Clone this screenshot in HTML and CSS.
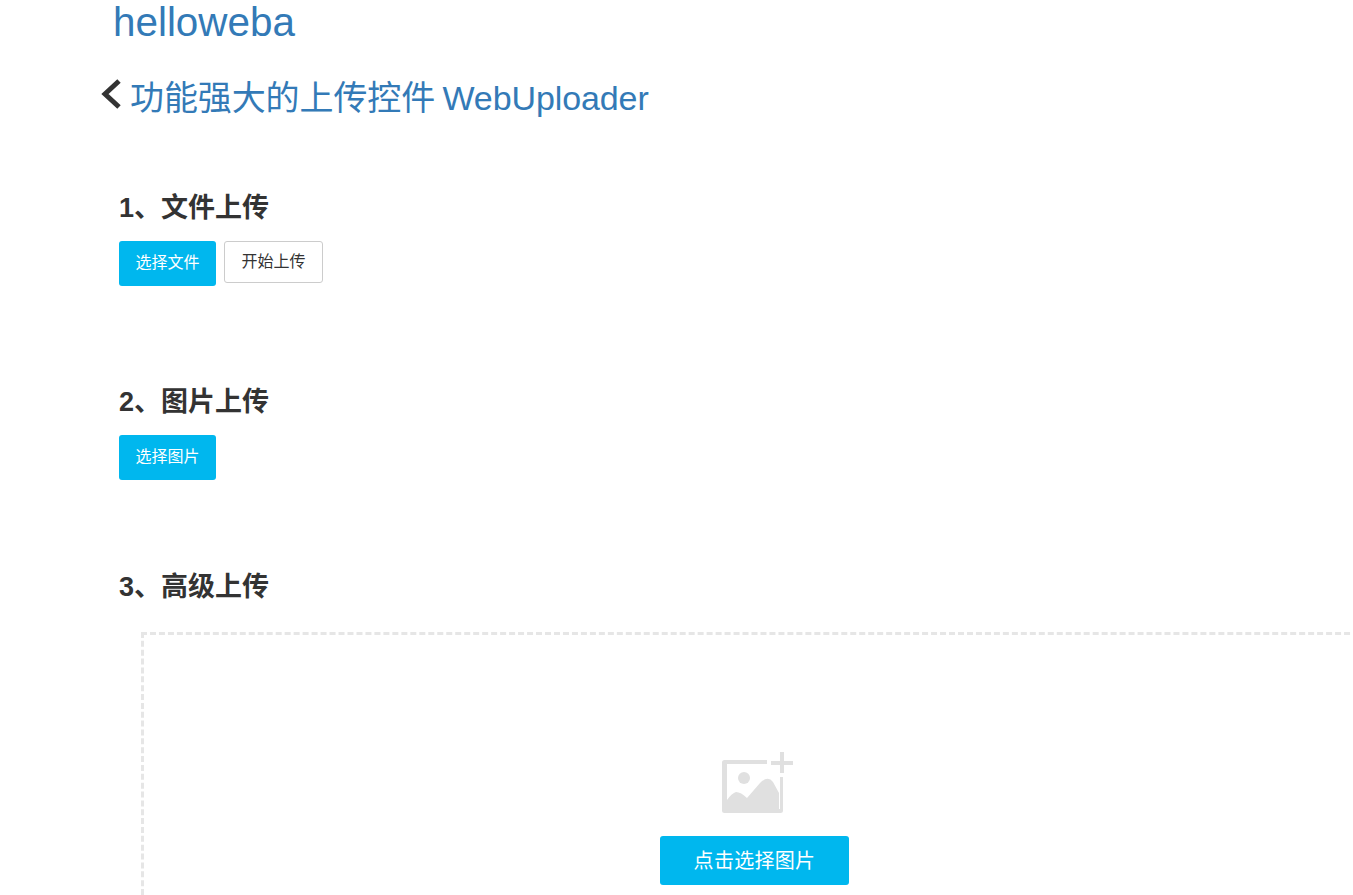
FILE: index.html
```html
<!DOCTYPE html>
<html lang="zh-CN">
<head>
<meta charset="utf-8">
<title>功能强大的上传控件 WebUploader</title>
<link rel="stylesheet" href="styles.css">
</head>
<body>
<div class="page">
  <h1 class="site-title"><a href="#">helloweba</a></h1>
  <h2 class="article-title">
    <svg class="back" viewBox="0 0 22 32" width="22" height="32" aria-hidden="true"><path d="M19 3 L5 16 L19 29" fill="none" stroke="#333" stroke-width="5"/></svg>
    <a href="#">功能强大的上传控件 WebUploader</a>
  </h2>
  <section class="demo first">
    <h3>1、文件上传</h3>
    <div class="actions">
      <button class="btn pick"><span>选择文件</span></button>
      <button class="btn plain"><span>开始上传</span></button>
    </div>
  </section>
  <section class="demo second">
    <h3>2、图片上传</h3>
    <div class="actions">
      <button class="btn pick"><span>选择图片</span></button>
    </div>
  </section>
  <section class="demo third">
    <h3>3、高级上传</h3>
    <div class="dropzone">
      <svg class="add-image" viewBox="0 0 72 62" width="72" height="62" aria-hidden="true">
        <path fill="#e0e0e0" d="M2.500 9 H45 V13 H5 V49 Q10 42 14 41 Q19 41 25 47 L38 32 Q46 24 51 31 L57 42 V62 H2.500 Q0 62 0 59.500 V11.500 Q0 9 2.500 9 Z"/>
        <path fill="#e0e0e0" d="M58 26 H61 V59.500 Q61 62 58.500 62 H57 V58 H58 Z"/>
        <circle cx="22" cy="27" r="6" fill="#e0e0e0"/>
        <path fill="#e0e0e0" d="M58 1 H62 V10 H71 V14 H62 V22 H58 V14 H49 V10 H58 Z"/>
      </svg>
      <button class="btn big"><span>点击选择图片</span></button>
    </div>
  </section>
</div>
</body>
</html>
```
FILE: styles.css
```css
* { box-sizing: border-box; }
html, body { margin: 0; height: 895px; overflow: hidden; background: #fff; }
body {
  font-family: "Liberation Sans", "Noto Sans CJK SC", sans-serif;
  color: #333;
}
.page { padding-left: 100px; height: 895px; overflow: hidden; }
a { color: #337ab7; text-decoration: none; }
.site-title {
  margin: 0 0 0 13px;
  height: 44px;
  font-size: 40.400px;
  font-weight: 400;
  line-height: 44px;
}
.article-title {
  margin: 30px 0 0;
  height: 48px;
  display: flex;
  align-items: center;
  font-size: 34px;
  font-weight: 400;
  line-height: 48px;
  word-spacing: -2px;
  letter-spacing: -0.1px;
}
.back { margin-right: 8px; margin-top: -8px; }
.demo { padding-left: 19px; }
.demo h3 {
  margin: 0;
  height: 38px;
  padding-top: 1px;
  font-size: 27px;
  font-weight: 700;
  line-height: 38px;
}
.first { margin-top: 66px; }
.second { margin-top: 96px; }
.third { margin-top: 87px; }
.actions { display: flex; align-items: flex-start; gap: 8px; margin-top: 15px; }
.btn {
  border: 0;
  padding: 0;
  border-radius: 3px;
  font-family: inherit;
  font-size: 16px;
  color: #fff;
}
.pick { width: 97px; height: 45px; background: #00b7ee; padding-bottom: 6px; }
.plain { width: 99px; height: 42px; background: #fff; color: #333; border: 1px solid #ccc; padding-bottom: 4px; }
.dropzone {
  margin: 27px 0 0 22px;
  width: 1227px;
  height: 263px;
  border: 3px dashed #e6e6e6;
  border-bottom: 0;
  display: flex;
  flex-direction: column;
  align-items: center;
  padding-top: 116px;
}
.add-image { display: block; flex: none; margin-left: 6px; }
.big { flex: none; width: 189px; height: 49px; margin-top: 23px; font-size: 20px; letter-spacing: 0.3px; background: #00b7ee; padding-bottom: 2px; }
```
